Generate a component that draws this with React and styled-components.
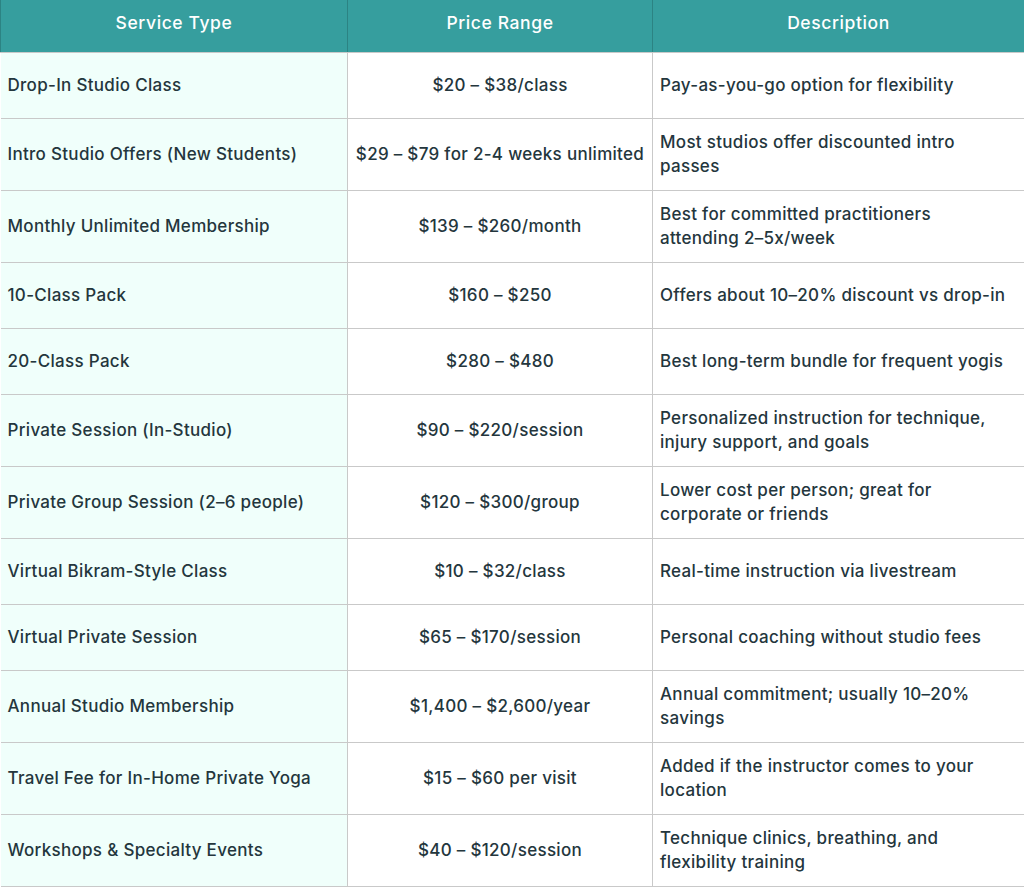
import React from 'react';
import styled, {createGlobalStyle} from "styled-components";

const GlobalStyle = createGlobalStyle`
  html, body {
    margin: 0;
    padding: 0;
    background: #ffffff;
  }
  body {
    font-family: Inter, "Noto Sans", "Liberation Sans", sans-serif;
  }
`

const Table = styled.table`
  width: 1024px;
  border-collapse: collapse;
  table-layout: fixed;
  color: #24363d;
  font-size: 17px;
  font-weight: 500;
  letter-spacing: 0.3px;
  line-height: 24px;
`
const Th = styled.th`
  height: 46px;
  padding: 0 8px 6px;
  background-color: #369e9e;
  color: #ffffff;
  font-weight: 500;
  font-size: 17.5px;
  letter-spacing: 0.6px;
  text-align: center;
  border: 1px solid #2c8383;
  border-top: none;
  border-bottom: 1px solid #c9c9c9;
`
const Td = styled.td`
  height: 42px;
  padding: 11px 7px 12px;
  vertical-align: middle;
  border: 1px solid #c9c9c9;
  text-align: ${p => p.$center ? 'center' : 'left'};
  background-color: ${p => p.$tint ? '#f0fffb' : '#ffffff'};

  &:first-child {
    border-left: none;
  }

  &:last-child {
    padding-right: 13px;
  }
`

const rows = [
    ["Drop-In Studio Class", "$20 – $38/class", "Pay-as-you-go option for flexibility"],
    ["Intro Studio Offers (New Students)", "$29 – $79 for 2-4 weeks unlimited", "Most studios offer discounted intro passes"],
    ["Monthly Unlimited Membership", "$139 – $260/month", "Best for committed practitioners attending 2–5x/week"],
    ["10-Class Pack", "$160 – $250", "Offers about 10–20% discount vs drop-in"],
    ["20-Class Pack", "$280 – $480", "Best long-term bundle for frequent yogis"],
    ["Private Session (In-Studio)", "$90 – $220/session", "Personalized instruction for technique, injury support, and goals"],
    ["Private Group Session (2–6 people)", "$120 – $300/group", "Lower cost per person; great for corporate or friends"],
    ["Virtual Bikram-Style Class", "$10 – $32/class", "Real-time instruction via livestream"],
    ["Virtual Private Session", "$65 – $170/session", "Personal coaching without studio fees"],
    ["Annual Studio Membership", "$1,400 – $2,600/year", "Annual commitment; usually 10–20% savings"],
    ["Travel Fee for In-Home Private Yoga", "$15 – $60 per visit", "Added if the instructor comes to your location"],
    ["Workshops & Specialty Events", "$40 – $120/session", "Technique clinics, breathing, and flexibility training"],
];

const App = () => {
    return (
        <>
            <GlobalStyle/>
            <Table>
                <colgroup>
                    <col style={{width: 347}}/>
                    <col style={{width: 305}}/>
                    <col style={{width: 372}}/>
                </colgroup>
                <thead>
                <tr>
                    <Th>Service Type</Th>
                    <Th>Price Range</Th>
                    <Th>Description</Th>
                </tr>
                </thead>
                <tbody>
                {rows.map(([type, price, desc]) => (
                    <tr key={type}>
                        <Td $tint>{type}</Td>
                        <Td $center>{price}</Td>
                        <Td>{desc}</Td>
                    </tr>
                ))}
                </tbody>
            </Table>
        </>
    );
};

export default App;
